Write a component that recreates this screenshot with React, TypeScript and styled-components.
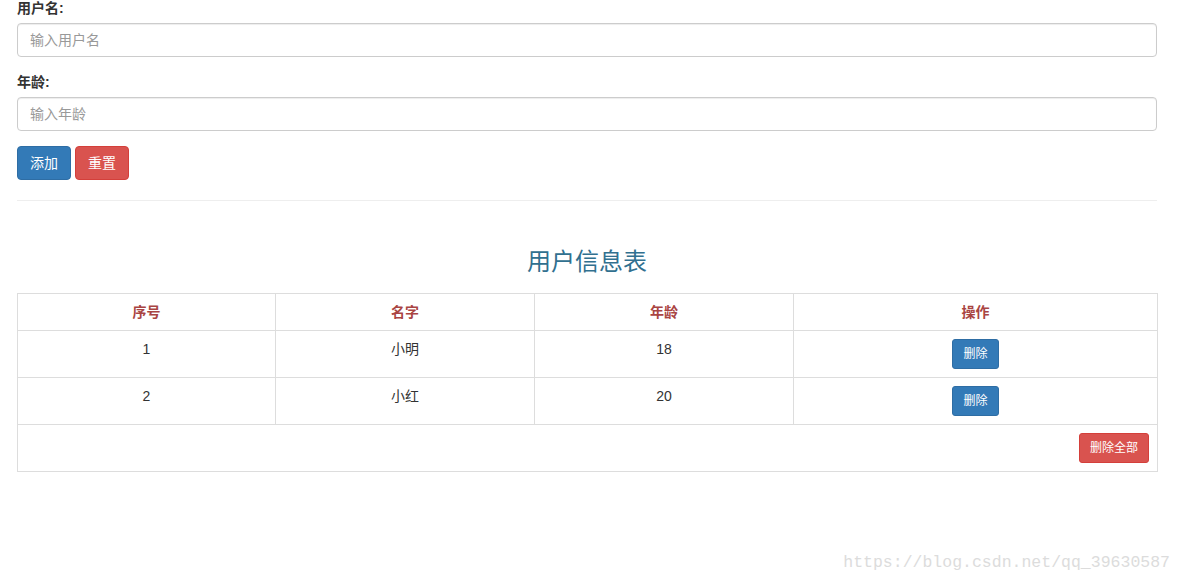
import React from "react";
import styled, { createGlobalStyle } from "styled-components";

const Global = createGlobalStyle`
  html, body { margin: 0; padding: 0; background: #fff; }
  body {
    font-family: "Liberation Sans", Arial, "Noto Sans CJK SC", sans-serif;
    font-size: 14px;
    line-height: 20px;
    color: #333;
  }
  * { box-sizing: border-box; }
`;

const Page = styled.div`
  position: relative;
  width: 1181px;
  height: 584px;
  overflow: hidden;
`;

const Container = styled.div`
  width: 1140px;
  margin-left: 17px;
  margin-top: -2px;
`;

const FormGroup = styled.div`
  margin-bottom: 15px;
`;

const Label = styled.label`
  display: block;
  font-weight: bold;
  margin-bottom: 5px;
`;

const Input = styled.input`
  display: block;
  width: 100%;
  height: 34px;
  padding: 6px 12px;
  font-family: inherit;
  font-size: 14px;
  line-height: 20px;
  color: #555;
  border: 1px solid #ccc;
  border-radius: 4px;
  box-shadow: inset 0 1px 1px rgba(0, 0, 0, 0.075);
  outline: none;
  &::placeholder { color: #999; }
`;

const ButtonRow = styled.div`
  display: flex;
  gap: 4px;
`;

const Button = styled.button<{ $variant: "primary" | "danger"; $small?: boolean }>`
  font-family: inherit;
  font-size: ${(p) => (p.$small ? "12px" : "14px")};
  line-height: ${(p) => (p.$small ? "18px" : "20px")};
  padding: ${(p) => (p.$small ? "5px 10px" : "6px 12px")};
  border-radius: ${(p) => (p.$small ? "3px" : "4px")};
  color: #fff;
  cursor: pointer;
  background: ${(p) => (p.$variant === "primary" ? "#337ab7" : "#d9534f")};
  border: 1px solid ${(p) => (p.$variant === "primary" ? "#2e6da4" : "#d43f3a")};
`;

const Rule = styled.hr`
  margin: 20px 0;
  border: 0;
  border-top: 1px solid #eee;
`;

const Title = styled.h3`
  margin: 48px 0 18px;
  font-size: 24px;
  line-height: 26px;
  font-weight: normal;
  text-align: center;
  color: #31708f;
`;

const Table = styled.table`
  width: 1140px;
  border-collapse: collapse;
  table-layout: fixed;
  border: 1px solid #ddd;
`;

const Th = styled.th`
  padding: 8px;
  border: 1px solid #ddd;
  text-align: center;
  color: #a94442;
  font-weight: bold;
  line-height: 20px;
`;

const Td = styled.td<{ $align?: string }>`
  padding: 8px;
  border: 1px solid #ddd;
  text-align: ${(p) => p.$align || "center"};
  vertical-align: top;
  line-height: 20px;
`;

const Watermark = styled.div`
  position: absolute;
  right: 11px;
  bottom: 11px;
  font-family: "Liberation Mono", "DejaVu Sans Mono", monospace;
  font-size: 16.5px;
  line-height: 20px;
  color: #dcdcdc;
`;

const rows = [
  { id: 1, name: "小明", age: 18 },
  { id: 2, name: "小红", age: 20 },
];

export default function App() {
  return (
    <Page>
      <Global />
      <Container>
        <FormGroup>
          <Label>用户名:</Label>
          <Input placeholder="输入用户名" />
        </FormGroup>
        <FormGroup>
          <Label>年龄:</Label>
          <Input placeholder="输入年龄" />
        </FormGroup>
        <ButtonRow>
          <Button $variant="primary">添加</Button>
          <Button $variant="danger">重置</Button>
        </ButtonRow>
        <Rule />
        <Title>用户信息表</Title>
        <Table>
          <colgroup>
            <col style={{ width: 258 }} />
            <col style={{ width: 259 }} />
            <col style={{ width: 259 }} />
            <col style={{ width: 364 }} />
          </colgroup>
          <thead>
            <tr>
              <Th>序号</Th>
              <Th>名字</Th>
              <Th>年龄</Th>
              <Th>操作</Th>
            </tr>
          </thead>
          <tbody>
            {rows.map((r) => (
              <tr key={r.id}>
                <Td>{r.id}</Td>
                <Td>{r.name}</Td>
                <Td>{r.age}</Td>
                <Td>
                  <Button $variant="primary" $small>
                    删除
                  </Button>
                </Td>
              </tr>
            ))}
            <tr>
              <Td colSpan={4} $align="right">
                <Button $variant="danger" $small>
                  删除全部
                </Button>
              </Td>
            </tr>
          </tbody>
        </Table>
      </Container>
      <Watermark>https://blog.csdn.net/qq_39630587</Watermark>
    </Page>
  );
}
